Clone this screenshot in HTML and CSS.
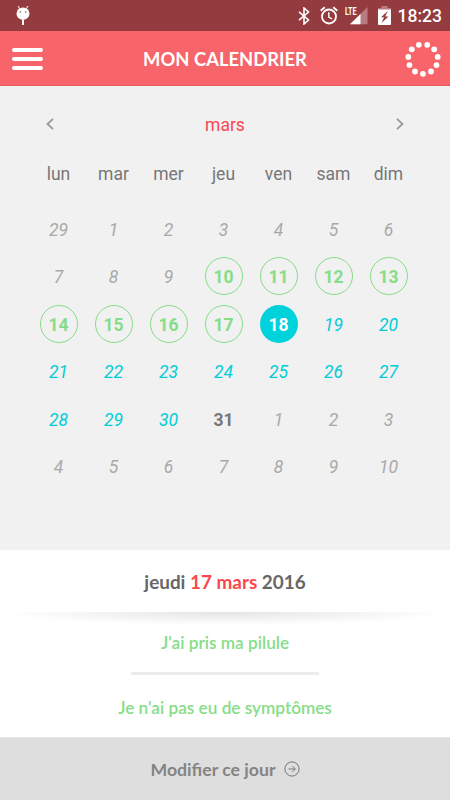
FILE: index.html
```html
<!DOCTYPE html>
<html lang="fr">
<head>
    <meta charset="utf-8">
    <title>Mon calendrier</title>
    <link rel="stylesheet" href="styles.css">
</head>
<body>
    <div class="status-bar">
        <svg class="debug-icon" width="14" height="21" viewBox="0 0 14 21">
            <path d="M2 1l2 3M12 1l-2 3" stroke="#fff" stroke-width="1"/>
            <ellipse cx="7" cy="8.7" rx="6.5" ry="6.2" fill="#fff"/>
            <circle cx="4.3" cy="7" r=".8" fill="#943b40"/>
            <circle cx="9.7" cy="7" r=".8" fill="#943b40"/>
            <path d="M7 15v5" stroke="#fff" stroke-width="2"/>
        </svg>
        <div class="status-right">
            <svg class="bluetooth" width="12" height="18" viewBox="0 0 12 18">
                <path d="M1 4.8l9.5 8.2L6 17V1l4.5 4L1 13.2" fill="none" stroke="#fff" stroke-width="1.6"/>
            </svg>
            <svg class="alarm" width="18" height="19" viewBox="0 0 18 19">
                <circle cx="9" cy="10.5" r="7" fill="none" stroke="#fff" stroke-width="1.8"/>
                <path d="M.7 4.7L4.7 1.2M17.3 4.7l-4-3.5" stroke="#fff" stroke-width="1.8"/>
                <path d="M8.8 6.3v4.7l3.4 2" fill="none" stroke="#fff" stroke-width="1.4"/>
            </svg>
            <svg class="signal" width="23" height="19" viewBox="0 0 23 19">
                <path d="M22.5 1v17.3H5z" fill="#b97b7f"/>
                <path d="M15.5 7.9v10.4H5z" fill="#fff"/>
                <text class="lte" x="0" y="8.8" textLength="11.5" lengthAdjust="spacingAndGlyphs">LTE</text>
            </svg>
            <svg class="battery" width="13" height="19" viewBox="0 0 13 19">
                <path d="M3.5 0h6v2H13v2H0V2h3.5z" fill="#b97b7f"/>
                <path d="M0 3.5h13V18q0 1-1 1H1q-1 0-1-1z" fill="#fff"/>
                <path d="M9.8 5L3 11.2h3L3.6 17 10.4 10.4H7.2z" fill="#943b40"/>
            </svg>
            <span class="clock">18:23</span>
        </div>
    </div>

    <header class="app-header">
        <div class="menu">
            <span></span>
            <span></span>
            <span></span>
        </div>
        <h1>MON CALENDRIER</h1>
        <svg class="pill-ring" width="36" height="36" viewBox="-18 -18 36 36" fill="#fff">
            <circle cx="0" cy="14.8" r="2.9"/>
            <circle cx="8" cy="12.5" r="2.9"/>
            <circle cx="13.5" cy="6.1" r="2.9"/>
            <circle cx="14.7" cy="-2.1" r="2.9"/>
            <circle cx="11.2" cy="-9.7" r="2.9"/>
            <circle cx="4.2" cy="-14.2" r="2.9"/>
            <circle cx="-4.2" cy="-14.2" r="2.9"/>
            <circle cx="-11.2" cy="-9.7" r="2.9"/>
            <circle cx="-14.7" cy="-2.1" r="2.9"/>
            <circle cx="-13.5" cy="6.1" r="2.9"/>
            <circle cx="-8" cy="12.5" r="2.9"/>
        </svg>
    </header>

    <div class="calendar">
        <div class="month">
            <svg width="8" height="12" viewBox="0 0 8 12">
                <path d="M7 .8L1.5 6 7 11.2" fill="none" stroke="#999" stroke-width="1.8"/>
            </svg>
            <span>mars</span>
            <svg width="8" height="12" viewBox="0 0 8 12">
                <path d="M1 .8L6.5 6 1 11.2" fill="none" stroke="#999" stroke-width="1.8"/>
            </svg>
        </div>

        <div class="week-days">
            <span>lun</span>
            <span>mar</span>
            <span>mer</span>
            <span>jeu</span>
            <span>ven</span>
            <span>sam</span>
            <span>dim</span>
        </div>

        <div class="days">
            <span>29</span>
            <span>1</span>
            <span>2</span>
            <span>3</span>
            <span>4</span>
            <span>5</span>
            <span>6</span>

            <span>7</span>
            <span>8</span>
            <span>9</span>
            <span class="taken">10</span>
            <span class="taken">11</span>
            <span class="taken">12</span>
            <span class="taken">13</span>

            <span class="taken">14</span>
            <span class="taken">15</span>
            <span class="taken">16</span>
            <span class="taken">17</span>
            <span class="today">18</span>
            <span class="next">19</span>
            <span class="next">20</span>

            <span class="next">21</span>
            <span class="next">22</span>
            <span class="next">23</span>
            <span class="next">24</span>
            <span class="next">25</span>
            <span class="next">26</span>
            <span class="next">27</span>

            <span class="next">28</span>
            <span class="next">29</span>
            <span class="next">30</span>
            <span class="pause">31</span>
            <span>1</span>
            <span>2</span>
            <span>3</span>

            <span>4</span>
            <span>5</span>
            <span>6</span>
            <span>7</span>
            <span>8</span>
            <span>9</span>
            <span>10</span>
        </div>
    </div>

    <h2 class="selected-day">jeudi <span>17 mars</span> 2016</h2>

    <div class="details">
        <p>J'ai pris ma pilule</p>
        <hr>
        <p>Je n'ai pas eu de symptômes</p>
    </div>

    <button class="edit-button">
        <span>Modifier ce jour</span>
        <svg width="16" height="16" viewBox="0 0 16 16" fill="none" stroke="#777" stroke-width="1">
            <circle cx="8" cy="8" r="7.1"/>
            <path d="M4.5 8h6.7M8.5 5.2L11.3 8l-2.8 2.8"/>
        </svg>
    </button>
</body>
</html>
```
FILE: styles.css
```css
body {
    margin: 0;
    width: 450px;
    height: 800px;
    display: flex;
    flex-direction: column;
    background-color: #fff;
    font-family: Lato, sans-serif;
    overflow: hidden;
}

.status-bar {
    box-sizing: border-box;
    height: 31px;
    padding: 5px 8px 0 16px;
    display: flex;
    justify-content: space-between;
    align-items: flex-start;
    background-color: #943b40;
}

.status-right {
    display: flex;
    align-items: flex-start;
}

.bluetooth {
    margin: 2px 10px 0 0;
}

.alarm {
    margin: 1px 7px 0 0;
}

.signal {
    margin: 1px 10px 0 0;
}

.battery {
    margin: 1px 7px 0 0;
}

.lte {
    font-family: Roboto, sans-serif;
    font-size: 11px;
    font-weight: bold;
    fill: #fff;
}

.clock {
    font-family: Roboto, sans-serif;
    font-size: 17.5px;
    font-weight: 500;
    line-height: 23px;
    color: #fff;
}

.app-header {
    box-sizing: border-box;
    height: 55px;
    padding: 1px 9px 0 12px;
    display: flex;
    justify-content: space-between;
    align-items: center;
    background-color: #f76469;
    border-bottom: 1px solid #e65a60;
}

.app-header h1 {
    margin: 0 0 0 2px;
    font-size: 18.4px;
    font-weight: bold;
    color: #fff;
}

.menu {
    width: 31px;
    display: flex;
    flex-direction: column;
    gap: 5px;
}

.menu span {
    height: 4px;
    border-radius: 2px;
    background-color: #fff;
}

.calendar {
    box-sizing: border-box;
    height: 464px;
    padding-top: 27px;
    background-color: #f1f1f1;
    font-family: Roboto, sans-serif;
    font-size: 17.5px;
}

.month {
    height: 24px;
    padding: 0 46px;
    display: flex;
    justify-content: space-between;
    align-items: center;
    color: #f94850;
}

.month svg {
    margin-bottom: 2px;
}

.week-days,
.days {
    display: grid;
    grid-template-columns: repeat(7, 55px);
    margin-left: 31px;
    text-align: center;
}

.week-days {
    margin-top: 25px;
    line-height: 25px;
    color: #777;
}

.days {
    margin-top: 18px;
    grid-auto-rows: 47.5px;
    justify-items: center;
    align-items: center;
    color: #a9a9a9;
    font-style: italic;
}

.days span {
    box-sizing: border-box;
    width: 38px;
    height: 38px;
    line-height: 40px;
}

.days .taken {
    border: 1px solid #86dd87;
    border-radius: 50%;
    line-height: 38px;
    color: #86dd87;
    font-style: normal;
    font-weight: bold;
}

.days .today {
    border-radius: 50%;
    background-color: #00d2dc;
    color: #fff;
    font-style: normal;
    font-weight: bold;
}

.days .next {
    color: #00cdd7;
}

.days .pause {
    color: #777;
    font-style: normal;
    font-weight: bold;
}

.selected-day {
    margin: 0;
    height: 62px;
    line-height: 64px;
    text-align: center;
    font-size: 18.9px;
    font-weight: bold;
    color: #666;
}

.selected-day span {
    color: #fa484f;
}

.details {
    height: 125px;
    text-align: center;
    font-size: 17.2px;
    font-weight: 600;
    color: #86dd87;
    background: radial-gradient(ellipse 225px 13px at 50% 0, #e4e4e4, #fff) no-repeat;
}

.details p {
    margin: 0;
    padding-top: 18px;
    line-height: 25px;
}

.details hr {
    width: 188px;
    height: 3px;
    margin: 17px auto 2px;
    border: none;
    background-color: #ebebeb;
}

.edit-button {
    height: 63px;
    padding: 0;
    display: flex;
    justify-content: center;
    align-items: center;
    gap: 8px;
    border: none;
    border-top: 1px solid #e6e6e6;
    background-color: #dedede;
    font-family: Lato, sans-serif;
    font-size: 17.7px;
    font-weight: bold;
    color: #848484;
}
```
